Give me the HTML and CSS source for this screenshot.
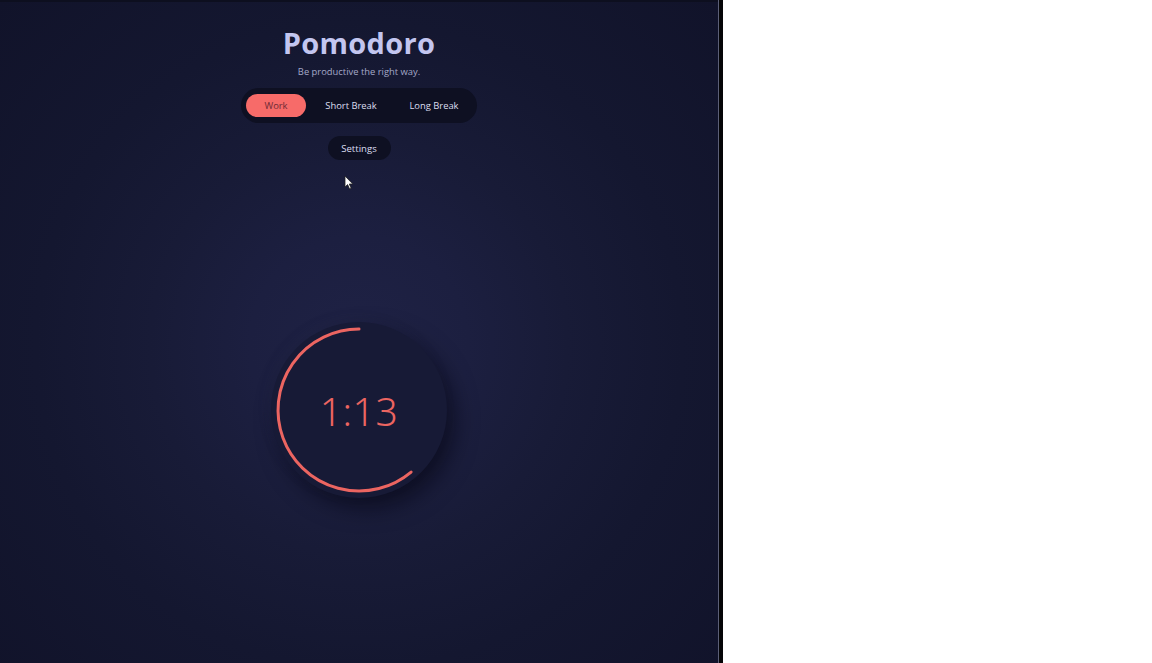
FILE: index.html
```html
<!DOCTYPE html>
<html lang="en">
<head>
<meta charset="utf-8">
<title>Pomodoro</title>
<link rel="stylesheet" href="styles.css">
</head>
<body>
<div class="screen">
  <main class="panel">
    <h1 class="title">Pomodoro</h1>
    <p class="subtitle">Be productive the right way.</p>
    <nav class="tabs">
      <button class="tab active">Work</button>
      <button class="tab short">Short Break</button>
      <button class="tab long">Long Break</button>
    </nav>
    <button class="settings">Settings</button>
    <div class="timer-area">
      <div class="timer">
        <svg class="ring" width="176" height="176" viewBox="0 0 176 176">
          <path d="M88 7 A81 81 0 1 0 140.1 150.05" fill="none" stroke="#ec6561" stroke-width="3" stroke-linecap="round"/>
        </svg>
        <span class="time">1:13</span>
      </div>
    </div>
    <svg class="cursor" width="10" height="15" viewBox="0 0 10 15">
      <path d="M1 1 L1 12 L3.6 9.6 L5.6 14 L7.2 13.3 L5.3 9 L8.8 9 Z" fill="#fff" stroke="#222" stroke-width="0.8"/>
    </svg>
  </main>
  <div class="edge"></div>
  <div class="gap"></div>
  <div class="blank"></div>
</div>
</body>
</html>
```
FILE: styles.css
```css
html, body {
  margin: 0;
  padding: 0;
  background: #ffffff;
}

.screen {
  display: flex;
  width: 1152px;
  height: 663px;
}

.panel {
  position: relative;
  width: 718px;
  height: 663px;
  box-sizing: border-box;
  border-top: 2px solid #0d0f1f;
  display: flex;
  flex-direction: column;
  align-items: center;
  font-family: "Open Sans", "Noto Sans", sans-serif;
  background: radial-gradient(circle at 50% 52%, #1f2245 0%, #1c1f40 22%, #181b37 42%, #141730 65%, #11132a 100%);
}

.edge {
  width: 1px;
  background: #5b5f77;
}

.gap {
  width: 4px;
  background: #050507;
}

.blank {
  flex: 1;
  background: #ffffff;
}

.title {
  margin: 23px 0 0;
  font-size: 29px;
  line-height: 36px;
  font-weight: 700;
  color: #c3c6f0;
  letter-spacing: 0.3px;
}

.subtitle {
  margin: 4px 0 0;
  font-size: 9.4px;
  line-height: 13px;
  color: #a4a8c8;
}

.tabs {
  margin-top: 10px;
  display: flex;
  align-items: center;
  padding: 6px 5px;
  background: #0e1022;
  border-radius: 18px;
}

.tab {
  border: 0;
  background: transparent;
  color: #dcdef0;
  font-family: "Open Sans", "Noto Sans", sans-serif;
  font-size: 9.4px;
  height: 23px;
  padding: 0;
  border-radius: 12px;
  text-align: center;
}

.tab.active {
  background: #f76b69;
  color: #6e2a35;
  width: 60px;
}

.tab.short { width: 90px; }
.tab.long { width: 76px; }

.settings {
  margin-top: 13px;
  border: 0;
  background: #0e1022;
  color: #dcdef0;
  font-family: "Open Sans", "Noto Sans", sans-serif;
  font-size: 9.6px;
  height: 24px;
  width: 63px;
  border-radius: 12px;
  padding: 0;
}

.timer-area {
  margin-top: 162px;
  display: flex;
  justify-content: center;
}

.timer {
  position: relative;
  width: 176px;
  height: 176px;
  border-radius: 50%;
  background: #171a36;
  box-shadow: 8px 10px 22px rgba(3, 4, 14, 0.55), -3px -3px 10px rgba(40, 44, 80, 0.25);
  display: flex;
  align-items: center;
  justify-content: center;
}

.ring {
  position: absolute;
  left: 0;
  top: 0;
}

.time {
  font-family: "Noto Sans", "Open Sans", sans-serif;
  font-weight: 300;
  font-size: 39px;
  color: #ec6561;
  letter-spacing: 0.5px;
}

.cursor {
  position: absolute;
  left: 344px;
  top: 173px;
}
```
